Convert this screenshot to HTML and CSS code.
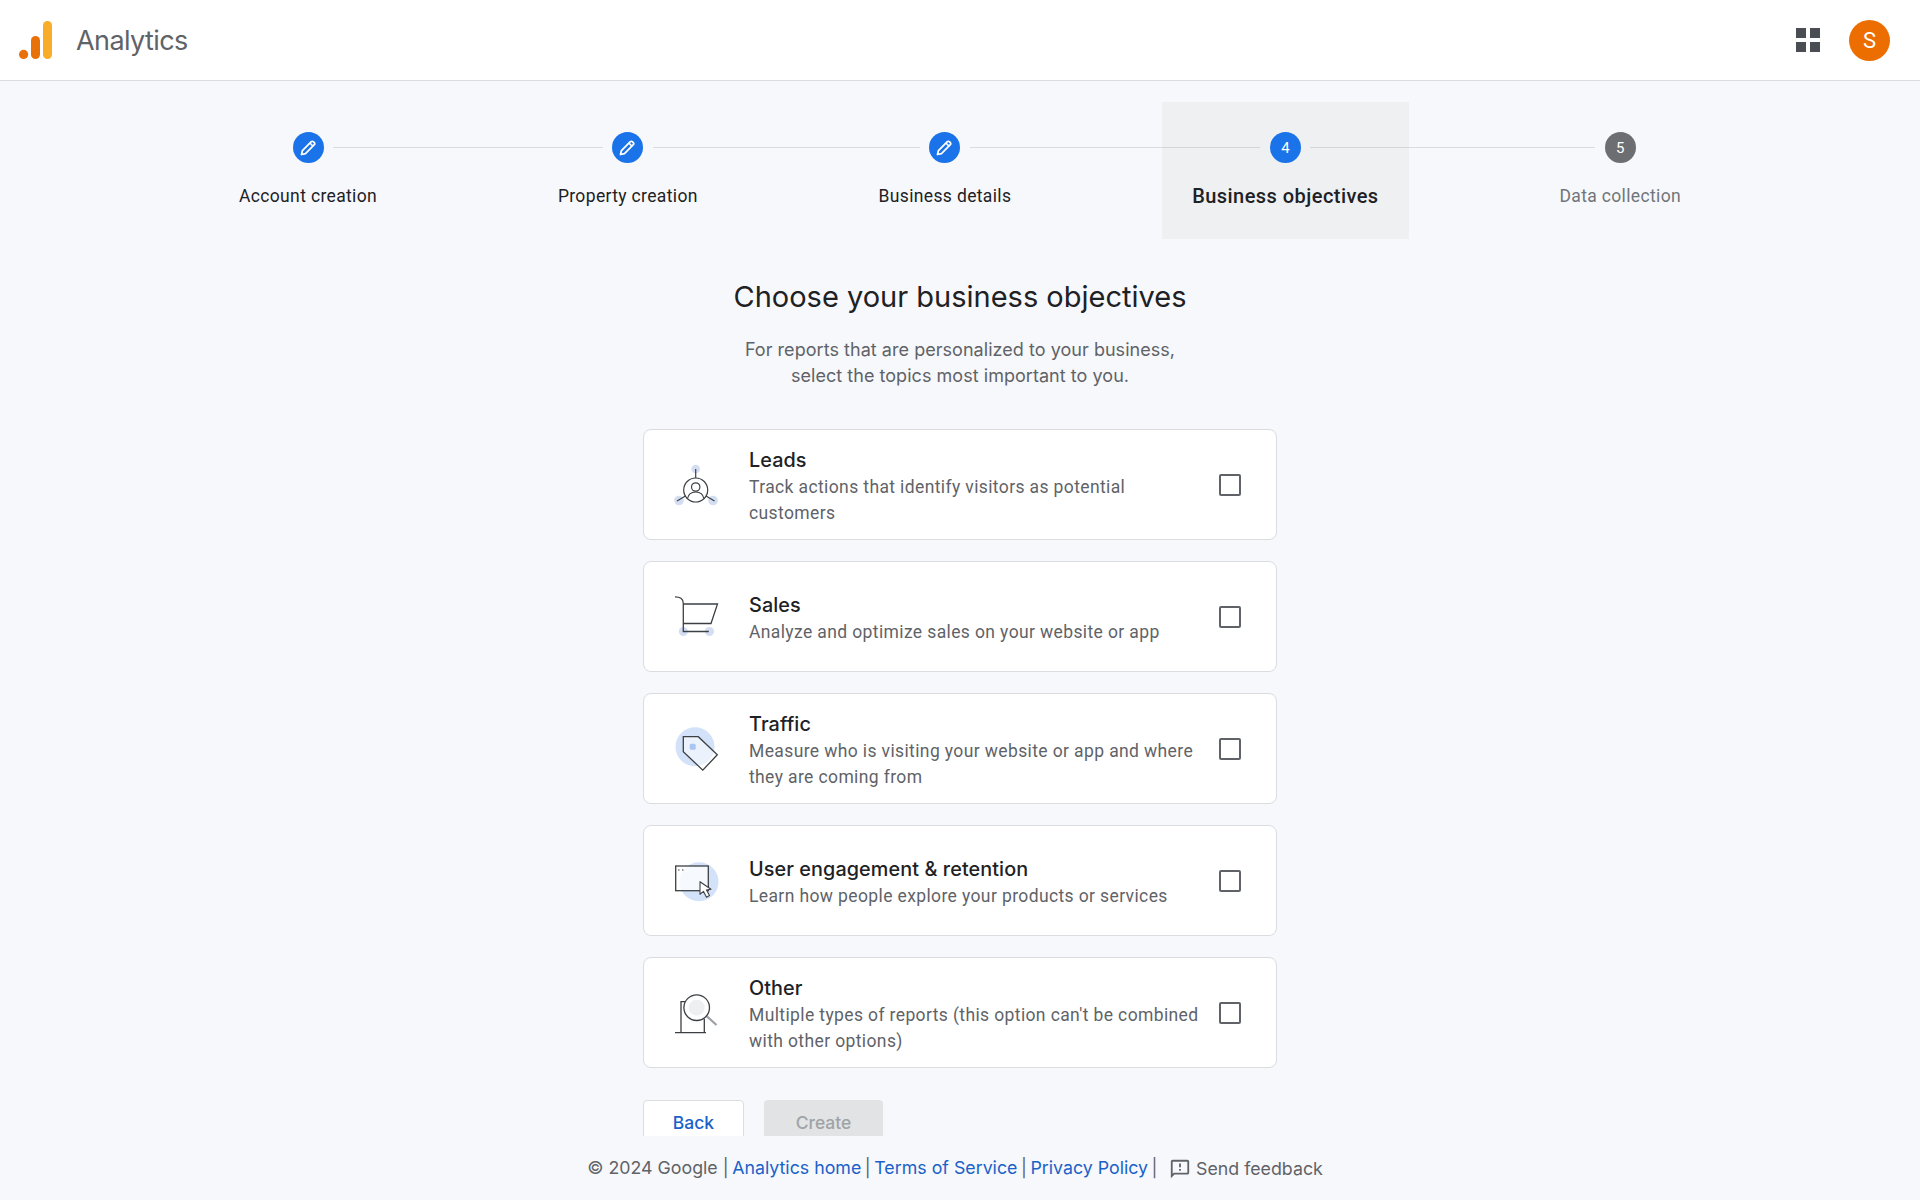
FILE: index.html
```html
<!DOCTYPE html>
<html lang="en">
<head>
<meta charset="utf-8">
<title>Analytics</title>
<link rel="stylesheet" href="styles.css">
</head>
<body>
<header class="topbar">
  <div class="brand">
    <svg class="logo" viewBox="0 0 33 38" width="33" height="38">
      <rect x="24" y="0" width="9" height="38" rx="4.5" fill="#f9ab2a"/>
      <rect x="12" y="15" width="9" height="23" rx="4.5" fill="#e8710a"/>
      <circle cx="4.6" cy="33.4" r="4.6" fill="#e8710a"/>
    </svg>
    <span class="brand-name">Analytics</span>
  </div>
  <div class="top-actions">
    <div class="apps"><i></i><i></i><i></i><i></i></div>
    <div class="avatar">S</div>
  </div>
</header>
<main class="main">
  <nav class="stepper">
    <div class="step step-first">
      <span class="bullet"><svg viewBox="0 0 18 18" width="21" height="21"><path d="M3 15l.8-3.4 7.6-7.6a1.2 1.2 0 0 1 1.7 0l.9.9a1.2 1.2 0 0 1 0 1.7l-7.6 7.6z" fill="none" stroke="#fff" stroke-width="1.5" stroke-linejoin="round"/><path d="M10.2 5.2l2.6 2.6" stroke="#fff" stroke-width="1.3"/></svg></span>
      <span class="label">Account creation</span>
    </div>
    <div class="connector"></div>
    <div class="step">
      <span class="bullet"><svg viewBox="0 0 18 18" width="21" height="21"><path d="M3 15l.8-3.4 7.6-7.6a1.2 1.2 0 0 1 1.7 0l.9.9a1.2 1.2 0 0 1 0 1.7l-7.6 7.6z" fill="none" stroke="#fff" stroke-width="1.5" stroke-linejoin="round"/><path d="M10.2 5.2l2.6 2.6" stroke="#fff" stroke-width="1.3"/></svg></span>
      <span class="label">Property creation</span>
    </div>
    <div class="connector"></div>
    <div class="step">
      <span class="bullet"><svg viewBox="0 0 18 18" width="21" height="21"><path d="M3 15l.8-3.4 7.6-7.6a1.2 1.2 0 0 1 1.7 0l.9.9a1.2 1.2 0 0 1 0 1.7l-7.6 7.6z" fill="none" stroke="#fff" stroke-width="1.5" stroke-linejoin="round"/><path d="M10.2 5.2l2.6 2.6" stroke="#fff" stroke-width="1.3"/></svg></span>
      <span class="label">Business details</span>
    </div>
    <div class="connector"></div>
    <div class="step step-active">
      <span class="bullet">4</span>
      <span class="label">Business objectives</span>
    </div>
    <div class="connector"></div>
    <div class="step step-todo step-last">
      <span class="bullet">5</span>
      <span class="label">Data collection</span>
    </div>
  </nav>

  <section class="content">
    <h1 class="title">Choose your business objectives</h1>
    <p class="intro">For reports that are personalized to your business,<br>select the topics most important to you.</p>

    <div class="cards">
      <label class="card">
        <svg class="icon" viewBox="0 0 60 60" width="60" height="60">
          <g fill="#d4def3"><circle cx="25.7" cy="14" r="4.3"/><circle cx="9" cy="45.5" r="4.8"/><circle cx="43" cy="45.5" r="4.8"/></g>
          <g fill="none" stroke="#3c4043" stroke-width="1.2">
            <circle cx="25.7" cy="35" r="12"/><circle cx="25.7" cy="32" r="4.2"/>
            <path d="M17.5 43.5c1-5 4.5-6.5 8.2-6.5s7.2 1.500 8.200 6.500"/>
            <path d="M25.700 14v9M15.400 41L7 46M36 41l8.500 5"/>
          </g>
        </svg>
        <div class="card-text"><div class="card-title">Leads</div><div class="card-desc">Track actions that identify visitors as potential customers</div></div>
        <span class="check"></span>
      </label>
      <label class="card">
        <svg class="icon" viewBox="0 0 60 60" width="60" height="60">
          <g fill="#d4def3"><circle cx="13.300" cy="44.500" r="4.500"/><circle cx="39.500" cy="44.500" r="4.500"/></g>
          <path d="M5 9.800c5 0 8.300 1.500 8.300 6.700v28h25.500M13.300 17h34.200l-6.500 19.500H13.300" fill="none" stroke="#3c4043" stroke-width="1.300"/>
        </svg>
        <div class="card-text"><div class="card-title">Sales</div><div class="card-desc">Analyze and optimize sales on your website or app</div></div>
        <span class="check"></span>
      </label>
      <label class="card">
        <svg class="icon" viewBox="0 0 60 60" width="60" height="60">
          <circle cx="25" cy="27.700" r="19.500" fill="#d3e2f9"/>
          <path d="M13.300 17.700h15l19 18-14.500 15.500-19.500-18.500z" fill="#fff" fill-opacity=".55" stroke="#3c4043" stroke-width="1.300"/>
          <rect x="19.700" y="24.700" width="6" height="6" rx="1.500" fill="#a9c5f2"/>
        </svg>
        <div class="card-text"><div class="card-title">Traffic</div><div class="card-desc">Measure who is visiting your website or app and where they are coming from</div></div>
        <span class="check"></span>
      </label>
      <label class="card">
        <svg class="icon" viewBox="0 0 60 60" width="60" height="60">
          <circle cx="29" cy="30.700" r="19.500" fill="#d3e2f9"/>
          <rect x="5.700" y="15" width="32.600" height="24.700" fill="#fff" fill-opacity=".8" stroke="#3c4043" stroke-width="1.300"/>
          <path d="M8 19h1.500M12 19h1.500" stroke="#3c4043" stroke-width="1.200"/>
          <path d="M30 30.700l0 12.500 3.500-2.800 3 5.800 3-1.700-3-5.400 4.500-.8z" fill="#fff" stroke="#3c4043" stroke-width="1.100" stroke-linejoin="round"/>
        </svg>
        <div class="card-text"><div class="card-title">User engagement &amp; retention</div><div class="card-desc">Learn how people explore your products or services</div></div>
        <span class="check"></span>
      </label>
      <label class="card">
        <svg class="icon" viewBox="0 0 60 60" width="60" height="60">
          <path d="M5 49.700h31M11 49.700V18.700h7M34.300 36v13.700" fill="none" stroke="#3c4043" stroke-width="1.300"/>
          <path d="M36.500 33l10 9" stroke="#9aa0a6" stroke-width="2.200"/>
          <circle cx="26.700" cy="24.700" r="12.800" fill="#fff" stroke="#3c4043" stroke-width="1.300"/>
          <circle cx="26.700" cy="24.700" r="8" fill="#eeeff1"/>
        </svg>
        <div class="card-text"><div class="card-title">Other</div><div class="card-desc">Multiple types of reports (this option can't be combined with other options)</div></div>
        <span class="check"></span>
      </label>
    </div>

    <div class="actions">
      <button class="btn btn-back" type="button">Back</button>
      <button class="btn btn-create" type="button" disabled>Create</button>
    </div>
  </section>
</main>
<footer class="footer">
  <span>© 2024 Google |</span>
  <a href="#">Analytics home</a>
  <span>|</span>
  <a href="#">Terms of Service</a>
  <span>|</span>
  <a href="#">Privacy Policy</a>
  <span>|</span>
  <span class="feedback">
    <svg viewBox="0 0 24 24" width="22" height="22"><path fill="#5f6368" d="M20 2H4c-1.100 0-2 .9-2 2v18l4-4h14c1.100 0 2-.9 2-2V4c0-1.100-.9-2-2-2zm0 14H5.170L4 17.170V4h16v12zM11 12h2v2h-2zm0-6h2v4h-2z"/></svg>
    Send feedback
  </span>
</footer>
</body>
</html>
```

FILE: styles.css
```css
* { box-sizing: border-box; }
html, body { height: 100%; }
body {
  margin: 0;
  height: 100vh;
  display: flex;
  flex-direction: column;
  overflow: hidden;
  background: #f7f8fb;
  color: #202124;
  font-family: Roboto, "Liberation Sans", sans-serif;
}

.topbar {
  flex: none;
  height: 81px;
  background: #fff;
  border-bottom: 1px solid #dadce0;
  display: flex;
  align-items: center;
  justify-content: space-between;
  padding: 0 30px 0 19px;
}
.brand { display: flex; align-items: center; gap: 24px; }
.logo { display: block; }
.brand-name {
  font-family: Inter, "Open Sans", sans-serif;
  font-size: 27px;
  color: #5f6368;
  letter-spacing: -0.6px;
}
.top-actions { display: flex; align-items: center; gap: 29px; }
.apps {
  display: grid;
  grid-template-columns: 10px 10px;
  grid-auto-rows: 10px;
  gap: 4px;
}
.apps i { display: block; background: #4a4d51; }
.avatar {
  width: 41px;
  height: 41px;
  border-radius: 50%;
  background: #ec6e00;
  color: #fff;
  font-size: 22px;
  display: flex;
  align-items: center;
  justify-content: center;
}

.main {
  flex: 1;
  min-height: 0;
  overflow: hidden;
  padding-top: 21px;
}
.stepper {
  width: 1502px;
  margin: 0 auto;
  display: flex;
  align-items: flex-start;
}
.connector {
  flex: 1;
  height: 1px;
  margin-top: 45px;
  background: #dadce0;
}
.step {
  flex: none;
  position: relative;
  height: 137px;
  padding: 30px 30px 0;
  display: flex;
  flex-direction: column;
  align-items: center;
}
.step::before, .step::after {
  content: "";
  position: absolute;
  top: 45px;
  height: 1px;
  width: calc(50% - 25px);
  background: #dadce0;
}
.step::before { left: 0; }
.step::after { right: 0; }
.step-first::before, .step-last::after { display: none; }
.bullet {
  width: 31px;
  height: 31px;
  border-radius: 50%;
  background: #1a73e8;
  color: #fff;
  font-size: 15px;
  display: flex;
  align-items: center;
  justify-content: center;
}
.label {
  margin-top: 21px;
  font-size: 17.500px;
  line-height: 24px;
  letter-spacing: .35px;
  color: #202124;
  white-space: nowrap;
}
.step-active { background: #eff0f2; }
.step-active::before, .step-active::after { background: #d3d5d9; }
.step-active .label { font-weight: 500; font-size: 20px; letter-spacing: .45px; }
.step-todo .bullet { background: #6c6e71; }
.step-todo .label { color: #70757a; }

.content {
  width: 634px;
  margin: 0 auto;
}
.title {
  margin: 38px 0 0;
  font-family: Inter, "Open Sans", sans-serif;
  font-size: 29px;
  line-height: 40px;
  font-weight: 400;
  text-align: center;
  color: #202124;
}
.intro {
  margin: 20px 0 0;
  font-family: Inter, "Open Sans", sans-serif;
  font-size: 18px;
  line-height: 26px;
  letter-spacing: .04px;
  text-align: center;
  color: #5f6368;
}
.cards {
  margin-top: 40px;
  display: flex;
  flex-direction: column;
  gap: 21px;
}
.card {
  height: 111px;
  background: #fff;
  border: 1px solid #dadce0;
  border-radius: 8px;
  display: flex;
  align-items: center;
  padding: 0 35px 0 26px;
}
.icon { flex: none; display: block; }
.card-text { flex: 1; min-width: 0; margin: 4px 16px 0 19px; }
.card-title {
  font-family: Inter, "Open Sans", sans-serif;
  font-size: 19.800px;
  font-weight: 450;
  line-height: 24px;
  letter-spacing: .1px;
  color: #202124;
}
.card-desc {
  margin-top: 2px;
  font-size: 17.500px;
  line-height: 26px;
  letter-spacing: .38px;
  color: #5f6368;
}
.check {
  flex: none;
  width: 22px;
  height: 22px;
  border: 2px solid #5f6368;
  border-radius: 2px;
}
.actions {
  margin-top: 32px;
  display: flex;
  gap: 20px;
}
.btn {
  height: 44px;
  border-radius: 4px;
  font-family: Inter, "Open Sans", sans-serif;
  font-size: 17.500px;
  font-weight: 500;
  padding: 0;
}
.btn-back {
  width: 101px;
  background: #fff;
  border: 1px solid #dadce0;
  color: #1a62c9;
}
.btn-create {
  width: 119px;
  background: #e1e3e5;
  border: none;
  color: #a0a3a6;
}

.footer {
  flex: none;
  height: 64px;
  padding: 0 10px 1px 0;
  display: flex;
  align-items: center;
  justify-content: center;
  gap: 3.500px;
  font-family: Inter, "Open Sans", sans-serif;
  font-size: 17.800px;
  color: #5f6368;
}
.footer a { color: #1a62c9; text-decoration: none; }
.feedback {
  display: flex;
  align-items: center;
  gap: 5px;
  margin-left: 8px;
  position: relative;
  top: 1px;
}
```
